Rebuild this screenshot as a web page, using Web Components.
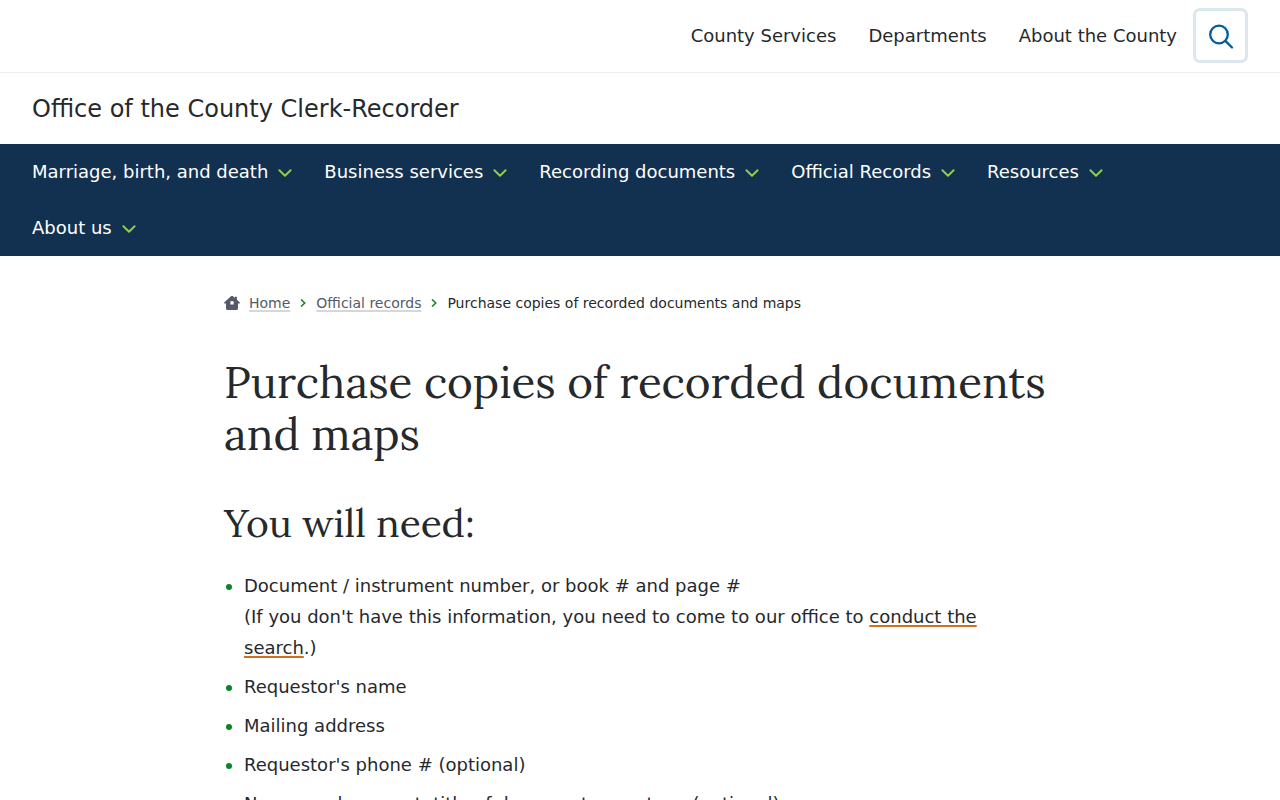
<!DOCTYPE html>
<html lang="en">
<head>
<meta charset="utf-8">
<title>Purchase copies of recorded documents and maps</title>
<style>
  body {
    margin: 0;
    background: #fff;
    color: #26292c;
    font: 18px/31px "DejaVu Sans", sans-serif;
  }
</style>
</head>
<body>
<county-page></county-page>

<script>
class TopBar extends HTMLElement {
  constructor() {
    super();
    this.attachShadow({ mode: "open" });
    this.shadowRoot.innerHTML = `
      <style>
        :host {
          display: block;
          border-bottom: 1px solid #eeeff0;
        }

        nav {
          display: flex;
          justify-content: flex-end;
          align-items: center;
          gap: 16px;
          padding: 8px 32px 9px;
        }

        .links {
          display: flex;
          gap: 32px;
        }

        button {
          display: flex;
          align-items: center;
          justify-content: center;
          width: 55px;
          height: 55px;
          padding: 0;
          background: #fff;
          border: 3px solid #dce7ed;
          border-radius: 7px;
          cursor: pointer;
        }
      </style>
      <nav aria-label="County">
        <div class="links"><slot></slot></div>
        <button type="button" aria-label="Search">
          <svg width="26" height="26" viewBox="0 0 26 26" fill="none" stroke="#005e9c" stroke-width="2.3">
            <circle cx="11" cy="11.5" r="8.8"/>
            <path d="M17.4 17.9l6.6 6.6" stroke-linecap="round"/>
          </svg>
        </button>
      </nav>
    `;
  }
}

class TopLink extends HTMLElement {
  constructor() {
    super();
    this.attachShadow({ mode: "open" });
    this.shadowRoot.innerHTML = `
      <style>
        :host { display: block; }
        a { color: inherit; text-decoration: none; }
      </style>
      <a href="#"><slot></slot></a>
    `;
  }
}

class OfficeTitle extends HTMLElement {
  constructor() {
    super();
    this.attachShadow({ mode: "open" });
    this.shadowRoot.innerHTML = `
      <style>
        :host {
          display: block;
          padding: 21px 32px 19px;
          font-size: 24px;
        }
        a { color: inherit; text-decoration: none; }
      </style>
      <a href="#"><slot></slot></a>
    `;
  }
}

class MainNav extends HTMLElement {
  constructor() {
    super();
    this.attachShadow({ mode: "open" });
    this.shadowRoot.innerHTML = `
      <style>
        :host {
          display: block;
          background: #12304f;
          color: #fff;
        }

        nav {
          display: flex;
          flex-wrap: wrap;
          padding: 0 32px;
        }
      </style>
      <nav aria-label="Office"><slot></slot></nav>
    `;
  }
}

class NavMenu extends HTMLElement {
  constructor() {
    super();
    this.attachShadow({ mode: "open" });
    this.shadowRoot.innerHTML = `
      <style>
        :host {
          display: block;
          padding-right: 32px;
        }

        button {
          display: flex;
          align-items: center;
          gap: 10px;
          height: 56px;
          padding: 0 0 2px;
          background: none;
          border: 0;
          color: inherit;
          font: inherit;
          cursor: pointer;
        }

        svg { margin-top: 4px; }
      </style>
      <button type="button" aria-expanded="false">
        <slot></slot>
        <svg width="14" height="8" viewBox="0 0 14 8" fill="none" stroke="#8fd14a" stroke-width="1.9" stroke-linecap="round" stroke-linejoin="round">
          <path d="M1.4 1.2L7 6.7l5.6-5.5"/>
        </svg>
      </button>
    `;
  }
}

class BreadCrumbs extends HTMLElement {
  constructor() {
    super();
    this.attachShadow({ mode: "open" });
    this.shadowRoot.innerHTML = `
      <style>
        :host {
          display: block;
          font-size: 14px;
          line-height: 22px;
        }

        nav {
          display: flex;
          flex-wrap: wrap;
          align-items: center;
        }

        .home { margin-right: 9px; }
      </style>
      <nav aria-label="Breadcrumb">
        <svg class="home" width="16" height="16" viewBox="0 0 16 16" fill="#535b68">
          <path fill-rule="evenodd" d="M7 1.3Q8 .4 9 1.3l1.8 1.6V1.7h2.1v3l2.7 2.6q.7.9-.4 1.3H14v5q0 1.4-1.4 1.4H3.4Q2 15 2 13.6v-5H.8q-1.1-.4-.4-1.3zM6.4 6.2v3.4h3.2v-3.4z"/>
        </svg>
        <slot></slot>
      </nav>
    `;
  }
}

class CrumbLink extends HTMLElement {
  constructor() {
    super();
    this.attachShadow({ mode: "open" });
    this.shadowRoot.innerHTML = `
      <style>
        :host {
          display: flex;
          align-items: center;
        }

        a {
          color: #535b68;
          text-decoration: underline 2px #d5d7db;
          text-underline-offset: 2px;
          text-decoration-skip-ink: none;
        }

        svg { margin: 0 10px; }
      </style>
      <a href="#"><slot></slot></a>
      <svg width="6" height="8" viewBox="0 0 6 8" fill="none" stroke="#16872b" stroke-width="1.6">
        <path d="M1 .5L4.7 4 1 7.5"/>
      </svg>
    `;
  }
}

class NeedList extends HTMLElement {
  constructor() {
    super();
    this.attachShadow({ mode: "open" });
    this.shadowRoot.innerHTML = `
      <style>
        :host {
          display: flex;
          flex-direction: column;
          gap: 8px;
        }
      </style>
      <slot></slot>
    `;
  }

  connectedCallback() {
    this.setAttribute("role", "list");
  }
}

class NeedItem extends HTMLElement {
  constructor() {
    super();
    this.attachShadow({ mode: "open" });
    this.shadowRoot.innerHTML = `
      <style>
        :host {
          display: grid;
          grid-template-columns: 6px 1fr;
          column-gap: 12px;
          padding: 0 20px 0 2px;
        }

        .dot {
          width: 6px;
          height: 6px;
          margin-top: 14px;
          border-radius: 50%;
          background: #088524;
        }
      </style>
      <span class="dot"></span>
      <div><slot></slot></div>
    `;
  }

  connectedCallback() {
    this.setAttribute("role", "listitem");
  }
}

class TextLink extends HTMLElement {
  constructor() {
    super();
    this.attachShadow({ mode: "open" });
    this.shadowRoot.innerHTML = `
      <style>
        :host { display: inline; }

        a {
          color: inherit;
          text-decoration: underline 2px #d16f20;
          text-underline-offset: 2px;
          text-decoration-skip-ink: none;
        }
      </style>
      <a href="#"><slot></slot></a>`;
  }
}

class CountyPage extends HTMLElement {
  constructor() {
    super();
    this.attachShadow({ mode: "open" });
    this.shadowRoot.innerHTML = `
      <style>
        :host { display: block; }

        main {
          max-width: 832px;
          margin: 0 auto;
          padding: 36px 32px;
        }

        h1,
        h2 {
          font-family: Lora, "Liberation Serif", serif;
          font-weight: 400;
        }

        h1 {
          margin: 42px 0 0;
          font-size: 44px;
          line-height: 52px;
        }

        h2 {
          margin: 37px 0 21px;
          font-size: 39px;
          line-height: 52px;
        }
      </style>
      <header>
        <top-bar>
          <top-link>County Services</top-link>
          <top-link>Departments</top-link>
          <top-link>About the County</top-link>
        </top-bar>
        <office-title>Office of the County Clerk-Recorder</office-title>
        <main-nav>
          <nav-menu>Marriage, birth, and death</nav-menu>
          <nav-menu>Business services</nav-menu>
          <nav-menu>Recording documents</nav-menu>
          <nav-menu>Official Records</nav-menu>
          <nav-menu>Resources</nav-menu>
          <nav-menu>About us</nav-menu>
        </main-nav>
      </header>
      <main>
        <bread-crumbs>
          <crumb-link>Home</crumb-link>
          <crumb-link>Official records</crumb-link>
          <span aria-current="page">Purchase copies of recorded documents and maps</span>
        </bread-crumbs>
        <h1>Purchase copies of recorded documents and maps</h1>
        <h2>You will need:</h2>
        <need-list>
          <need-item>Document / instrument number, or book # and page #<br>(If you don't have this information, you need to come to our office to <text-link>conduct the search</text-link>.)</need-item>
          <need-item>Requestor's name</need-item>
          <need-item>Mailing address</need-item>
          <need-item>Requestor's phone # (optional)</need-item>
          <need-item>Name on document, title of document, case type (optional)</need-item>
        </need-list>
      </main>
    `;
  }
}

customElements.define("top-bar", TopBar);
customElements.define("top-link", TopLink);
customElements.define("office-title", OfficeTitle);
customElements.define("main-nav", MainNav);
customElements.define("nav-menu", NavMenu);
customElements.define("bread-crumbs", BreadCrumbs);
customElements.define("crumb-link", CrumbLink);
customElements.define("need-list", NeedList);
customElements.define("need-item", NeedItem);
customElements.define("text-link", TextLink);
customElements.define("county-page", CountyPage);
</script>
</body>
</html>
